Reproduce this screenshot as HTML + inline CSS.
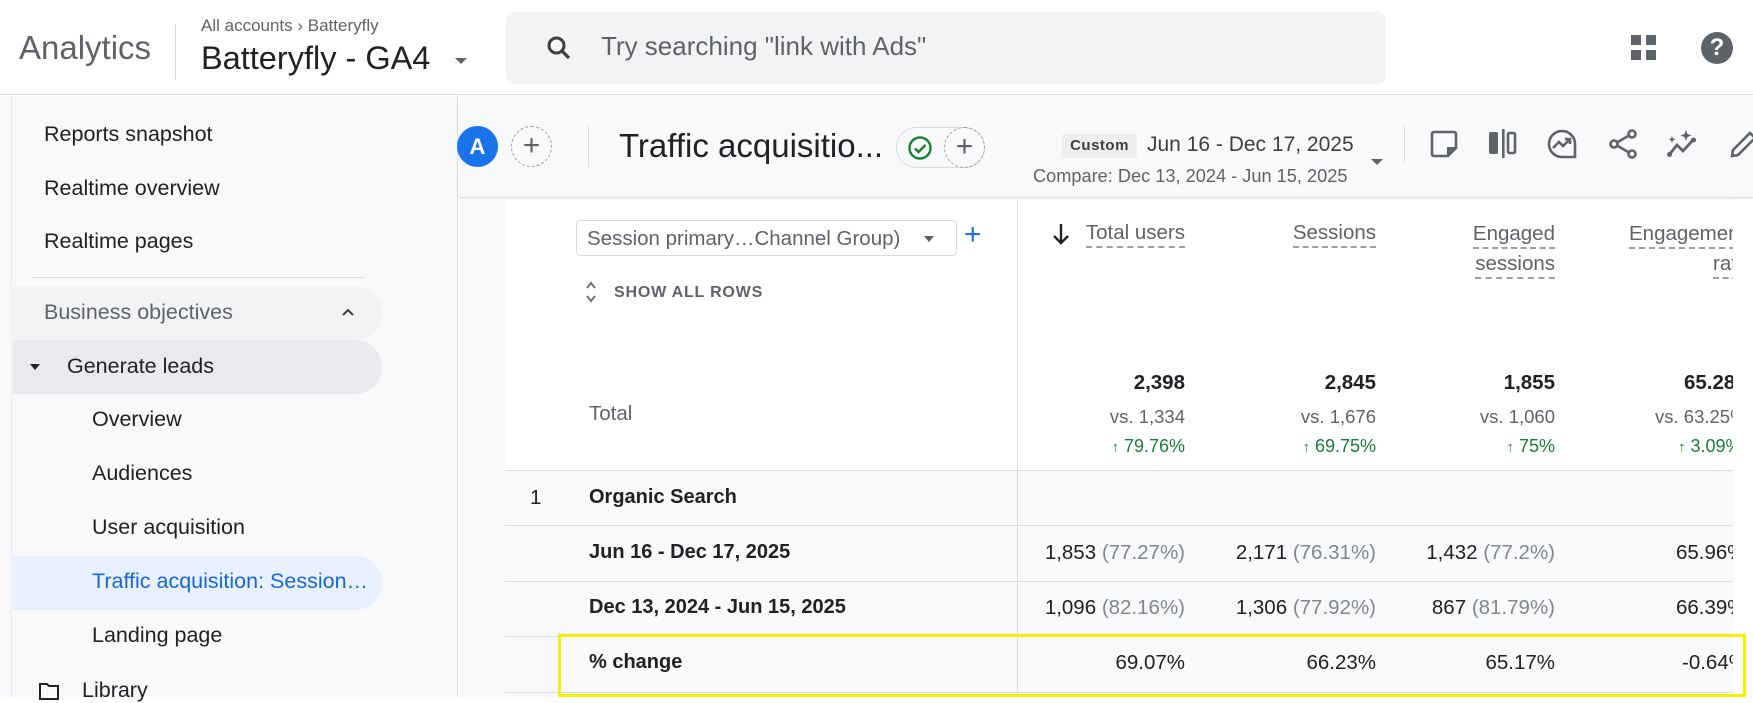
<!DOCTYPE html>
<html><head><meta charset="utf-8">
<style>
*{margin:0;padding:0;box-sizing:border-box}
body{width:1753px;height:697px;overflow:hidden;background:#fff;font-family:"Liberation Sans",Arial,sans-serif;color:#202124;position:relative}
.a{position:absolute;white-space:nowrap}
.nav{font-size:21.5px;color:#202124}
.r{text-align:right}
.hd{font-size:20.5px;color:#5f6368;border-bottom:2px dashed #9aa0a6;padding-bottom:2px;line-height:24px}
.v{font-size:20.5px;color:#202124}
.g{color:#80868b}
.lb{font-size:20px;font-weight:bold}
.gr{font-size:18px;color:#188038}
.vs{font-size:18.5px;color:#5f6368}
</style></head><body>
<!-- header -->
<div class="a" style="left:0;top:0;width:1753px;height:95px;background:#fff;border-bottom:1px solid #dadce0"></div>
<div class="a" style="left:19px;top:29px;font-size:33px;color:#5f6368">Analytics</div>
<div class="a" style="left:175px;top:24px;width:1px;height:56px;background:#dadce0"></div>
<div class="a" style="left:201px;top:16px;font-size:17px;color:#5f6368">All accounts &#8250; Batteryfly</div>
<div class="a" style="left:201px;top:40px;font-size:32.5px;color:#202124">Batteryfly - GA4</div>
<div class="a" style="left:455px;top:58px;width:0;height:0;border-left:6px solid transparent;border-right:6px solid transparent;border-top:6px solid #5f6368"></div>
<div class="a" style="left:506px;top:12px;width:880px;height:72px;background:#f1f3f4;border-radius:9px"></div>
<svg class="a" style="left:544px;top:33px" width="30" height="30" viewBox="0 0 24 24"><circle cx="10" cy="10" r="6" fill="none" stroke="#3c4043" stroke-width="2.4"/><path d="M14.5 14.5L20 20" stroke="#3c4043" stroke-width="2.6"/></svg>
<div class="a" style="left:601px;top:31px;font-size:26px;color:#5f6368">Try searching "link with Ads"</div>
<svg class="a" style="left:1630px;top:34px" width="28" height="28" viewBox="0 0 28 28"><rect x="1" y="1" width="10" height="10" fill="#5f6368"/><rect x="16" y="1" width="10" height="10" fill="#5f6368"/><rect x="1" y="16" width="10" height="10" fill="#5f6368"/><rect x="16" y="16" width="10" height="10" fill="#5f6368"/></svg>
<div class="a" style="left:1701px;top:32px;width:32px;height:32px;border-radius:50%;background:#5f6368;color:#fff;font-size:24px;font-weight:bold;text-align:center;line-height:32px">?</div>

<!-- sidebar -->
<div class="a" style="left:0;top:96px;width:458px;height:601px;background:#f8f9fa;border-right:1px solid #dadce0"></div>
<div class="a" style="left:11px;top:96px;width:1px;height:601px;background:#e8eaed"></div>
<div class="a nav" style="left:44px;top:122px">Reports snapshot</div>
<div class="a nav" style="left:44px;top:176px">Realtime overview</div>
<div class="a nav" style="left:44px;top:229px">Realtime pages</div>
<div class="a" style="left:31px;top:277px;width:334px;height:1px;background:#dadce0"></div>
<div class="a" style="left:13px;top:286px;width:369px;height:54px;background:#f1f3f4;border-radius:0 27px 27px 0"></div>
<div class="a nav" style="left:44px;top:300px;color:#5f6368">Business objectives</div>
<svg class="a" style="left:340px;top:305px" width="16" height="14" viewBox="0 0 16 14"><path d="M3 10L8 5L13 10" fill="none" stroke="#3c4043" stroke-width="2"/></svg>
<div class="a" style="left:13px;top:340px;width:369px;height:54px;background:#e8eaed;border-radius:0 27px 27px 0"></div>
<div class="a" style="left:30px;top:364px;width:0;height:0;border-left:5px solid transparent;border-right:5px solid transparent;border-top:6px solid #202124"></div>
<div class="a nav" style="left:67px;top:354px">Generate leads</div>
<div class="a nav" style="left:92px;top:407px">Overview</div>
<div class="a nav" style="left:92px;top:461px">Audiences</div>
<div class="a nav" style="left:92px;top:515px">User acquisition</div>
<div class="a" style="left:13px;top:556px;width:369px;height:54px;background:#e8f0fe;border-radius:0 27px 27px 0"></div>
<div class="a nav" style="left:92px;top:569px;color:#1967d2">Traffic acquisition: Session…</div>
<div class="a nav" style="left:92px;top:623px">Landing page</div>
<svg class="a" style="left:38px;top:682px" width="22" height="18" viewBox="0 0 22 18"><path d="M2 17V2h7l2 2h9v13z" fill="none" stroke="#202124" stroke-width="2"/></svg>
<div class="a nav" style="left:82px;top:678px">Library</div>

<!-- toolbar -->
<div class="a" style="left:459px;top:96px;width:1294px;height:102px;background:#f8f9fa;border-bottom:1px solid #dadce0;box-shadow:0 1px 3px rgba(0,0,0,.08)"></div>
<div class="a" style="left:457px;top:126px;width:41px;height:41px;border-radius:50%;background:#1a73e8;color:#fff;font-size:22px;font-weight:bold;text-align:center;line-height:41px">A</div>
<div class="a" style="left:511px;top:126px;width:41px;height:41px;border-radius:50%;border:1px dashed #9aa0a6;color:#5f6368;font-size:30px;text-align:center;line-height:37px">+</div>
<div class="a" style="left:588px;top:126px;width:1px;height:41px;background:#dadce0"></div>
<div class="a" style="left:619px;top:127px;font-size:33px;color:#202124">Traffic acquisitio...</div>
<div class="a" style="left:896px;top:127px;width:89px;height:41px;border-radius:21px;border:1px solid #dadce0;background:#f8f9fa"></div>
<svg class="a" style="left:907px;top:135px" width="26" height="26" viewBox="0 0 26 26"><circle cx="13" cy="13" r="10.5" fill="none" stroke="#188038" stroke-width="2.4"/><path d="M8 13.5l3.5 3.5 7-7" fill="none" stroke="#188038" stroke-width="2.4"/></svg>
<div class="a" style="left:944px;top:127px;width:41px;height:41px;border-radius:50%;border:1px dashed #9aa0a6;color:#5f6368;font-size:30px;text-align:center;line-height:37px">+</div>
<div class="a" style="left:1062px;top:134px;width:75px;height:24px;background:#eceef0;font-size:15px;color:#3c4043;text-align:center;line-height:24px;font-weight:bold;letter-spacing:.5px">Custom</div>
<div class="a" style="left:1147px;top:133px;font-size:21px;color:#3c4043">Jun 16 - Dec 17, 2025</div>
<div class="a" style="left:1033px;top:166px;font-size:18.2px;color:#5f6368">Compare: Dec 13, 2024 - Jun 15, 2025</div>
<div class="a" style="left:1371px;top:159px;width:0;height:0;border-left:6px solid transparent;border-right:6px solid transparent;border-top:6px solid #5f6368"></div>
<div class="a" style="left:1404px;top:126px;width:1px;height:36px;background:#dadce0"></div>
<svg class="a" style="left:1428px;top:128px" width="32" height="32" viewBox="0 0 32 32"><path d="M4 6a2 2 0 0 1 2-2h20a2 2 0 0 1 2 2v14l-8 8H6a2 2 0 0 1-2-2z" fill="none" stroke="#5f6368" stroke-width="2.6"/><path d="M20 28v-8h8" fill="#5f6368" stroke="#5f6368" stroke-width="2"/></svg>
<svg class="a" style="left:1487px;top:128px" width="32" height="32" viewBox="0 0 32 32"><rect x="2" y="4" width="9" height="22" rx="2" fill="#5f6368"/><rect x="15" y="1" width="2.6" height="29" fill="#5f6368"/><rect x="21" y="5" width="7" height="20" rx="1.5" fill="none" stroke="#5f6368" stroke-width="2.6"/></svg>
<svg class="a" style="left:1546px;top:128px" width="34" height="32" viewBox="0 0 34 32"><path d="M29 16A13 13 0 1 0 16 29h13z" fill="none" stroke="#5f6368" stroke-width="2.6"/><path d="M7 20l6-6 4 4 7-7M19 11h5v5" fill="none" stroke="#5f6368" stroke-width="2.6"/></svg>
<svg class="a" style="left:1607px;top:128px" width="32" height="32" viewBox="0 0 32 32"><circle cx="25" cy="6" r="3.5" fill="none" stroke="#5f6368" stroke-width="2.6"/><circle cx="7" cy="16" r="3.5" fill="none" stroke="#5f6368" stroke-width="2.6"/><circle cx="25" cy="26" r="3.5" fill="none" stroke="#5f6368" stroke-width="2.6"/><path d="M10 14.5l12-7M10 17.5l12 7" stroke="#5f6368" stroke-width="2.6"/></svg>
<svg class="a" style="left:1666px;top:128px" width="34" height="32" viewBox="0 0 34 32"><path d="M3 27l8-10 6 6 10-11" fill="none" stroke="#5f6368" stroke-width="2.8"/><circle cx="3.5" cy="26.5" r="2.5" fill="#5f6368"/><circle cx="27.5" cy="12" r="2.5" fill="#5f6368"/><path d="M20 2l1.5 4 4 1.5-4 1.5L20 13l-1.5-4-4-1.5 4-1.5zM6 8l1 2.5 2.5 1-2.5 1L6 15l-1-2.5-2.5-1 2.5-1z" fill="#5f6368"/></svg>
<svg class="a" style="left:1728px;top:128px" width="30" height="32" viewBox="0 0 30 32"><path d="M4 28l1-6L22 5l5 5L10 27z" fill="none" stroke="#5f6368" stroke-width="2.6"/></svg>

<!-- table -->
<div class="a" style="left:459px;top:199px;width:1294px;height:498px;background:#f8f9fa"></div>
<div class="a" style="left:505px;top:200px;width:1228px;height:271px;background:#fff;border-bottom:1px solid #dadce0"></div>
<div class="a" style="left:505px;top:471px;width:1228px;height:226px;background:#f8f9fa"></div>
<div class="a" style="left:1733px;top:199px;width:20px;height:498px;background:#fff"></div>
<div class="a" style="left:1017px;top:200px;width:1px;height:497px;background:#dadce0"></div>
<div class="a" style="left:505px;top:525px;width:1228px;height:1px;background:#dadce0"></div>
<div class="a" style="left:505px;top:581px;width:1228px;height:1px;background:#dadce0"></div>
<div class="a" style="left:505px;top:636px;width:1228px;height:1px;background:#dadce0"></div>
<div class="a" style="left:505px;top:692px;width:1228px;height:1px;background:#dadce0"></div>

<div class="a" style="left:576px;top:220px;width:381px;height:36px;border:1px solid #dadce0;border-radius:4px;background:#fff"></div>
<div class="a" style="left:587px;top:227px;font-size:20.5px;color:#5f6368">Session primary…Channel Group)</div>
<div class="a" style="left:924px;top:236px;width:0;height:0;border-left:5px solid transparent;border-right:5px solid transparent;border-top:6px solid #5f6368"></div>
<div class="a" style="left:964px;top:219px;font-size:30px;color:#1a73e8;line-height:32px">+</div>
<svg class="a" style="left:585px;top:280px" width="12" height="24" viewBox="0 0 12 24"><path d="M2 8l4-5 4 5M2 16l4 5 4-5" fill="none" stroke="#5f6368" stroke-width="1.8"/></svg>
<div class="a" style="left:614px;top:284px;font-size:16px;font-weight:bold;color:#5f6368;letter-spacing:.8px">SHOW ALL ROWS</div>
<div class="a" style="left:589px;top:402px;font-size:20.5px;color:#5f6368">Total</div>

<svg class="a" style="left:1052px;top:222px" width="18" height="24" viewBox="0 0 18 24"><path d="M9 2v19M2 14l7 7 7-7" fill="none" stroke="#202124" stroke-width="2.4"/></svg>
<div class="a r" style="right:568px;top:221px"><span class="hd">Total users</span></div>
<div class="a r" style="right:377px;top:221px"><span class="hd">Sessions</span></div>
<div class="a r" style="right:198px;top:221px;line-height:30px"><span class="hd">Engaged</span><br><span class="hd">sessions</span></div>
<div class="a" style="left:1629px;top:221px;width:104px;overflow:hidden;line-height:30px;text-align:left"><span class="hd">Engagement</span></div>
<div class="a" style="left:1713px;top:251px;width:20px;overflow:hidden;line-height:30px"><span class="hd">rate</span></div>

<div class="a r" style="right:568px;top:371px;font-size:20.5px;font-weight:bold">2,398</div>
<div class="a r" style="right:377px;top:371px;font-size:20.5px;font-weight:bold">2,845</div>
<div class="a r" style="right:198px;top:371px;font-size:20.5px;font-weight:bold">1,855</div>
<div class="a" style="left:1684px;top:371px;width:49px;overflow:hidden;font-size:20.5px;font-weight:bold">65.28%</div>
<div class="a r vs" style="right:568px;top:406px">vs. 1,334</div>
<div class="a r vs" style="right:377px;top:406px">vs. 1,676</div>
<div class="a r vs" style="right:198px;top:406px">vs. 1,060</div>
<div class="a vs" style="left:1655px;top:406px;width:78px;overflow:hidden">vs. 63.25%</div>
<div class="a r gr" style="right:568px;top:436px"><span style="font-size:15px;font-weight:bold">↑</span> 79.76%</div>
<div class="a r gr" style="right:377px;top:436px"><span style="font-size:15px;font-weight:bold">↑</span> 69.75%</div>
<div class="a r gr" style="right:198px;top:436px"><span style="font-size:15px;font-weight:bold">↑</span> 75%</div>
<div class="a gr" style="left:1678px;top:436px;width:55px;overflow:hidden"><span style="font-size:15px;font-weight:bold">↑</span> 3.09%</div>

<div class="a" style="left:530px;top:486px;font-size:20.5px">1</div>
<div class="a lb" style="left:589px;top:486px">Organic Search</div>
<div class="a lb" style="left:589px;top:541px">Jun 16 - Dec 17, 2025</div>
<div class="a lb" style="left:589px;top:596px">Dec 13, 2024 - Jun 15, 2025</div>
<div class="a lb" style="left:589px;top:651px">% change</div>

<div class="a r v" style="right:568px;top:541px">1,853 <span class="g">(77.27%)</span></div>
<div class="a r v" style="right:377px;top:541px">2,171 <span class="g">(76.31%)</span></div>
<div class="a r v" style="right:198px;top:541px">1,432 <span class="g">(77.2%)</span></div>
<div class="a v" style="left:1676px;top:541px;width:57px;overflow:hidden">65.96%</div>
<div class="a r v" style="right:568px;top:596px">1,096 <span class="g">(82.16%)</span></div>
<div class="a r v" style="right:377px;top:596px">1,306 <span class="g">(77.92%)</span></div>
<div class="a r v" style="right:198px;top:596px">867 <span class="g">(81.79%)</span></div>
<div class="a v" style="left:1676px;top:596px;width:57px;overflow:hidden">66.39%</div>
<div class="a r v" style="right:568px;top:651px">69.07%</div>
<div class="a r v" style="right:377px;top:651px">66.23%</div>
<div class="a r v" style="right:198px;top:651px">65.17%</div>
<div class="a v" style="left:1682px;top:651px;width:51px;overflow:hidden">-0.64%</div>

<div class="a" style="left:558px;top:634px;width:1188px;height:63px;border:3px solid #f7ef00"></div>
</body></html>
